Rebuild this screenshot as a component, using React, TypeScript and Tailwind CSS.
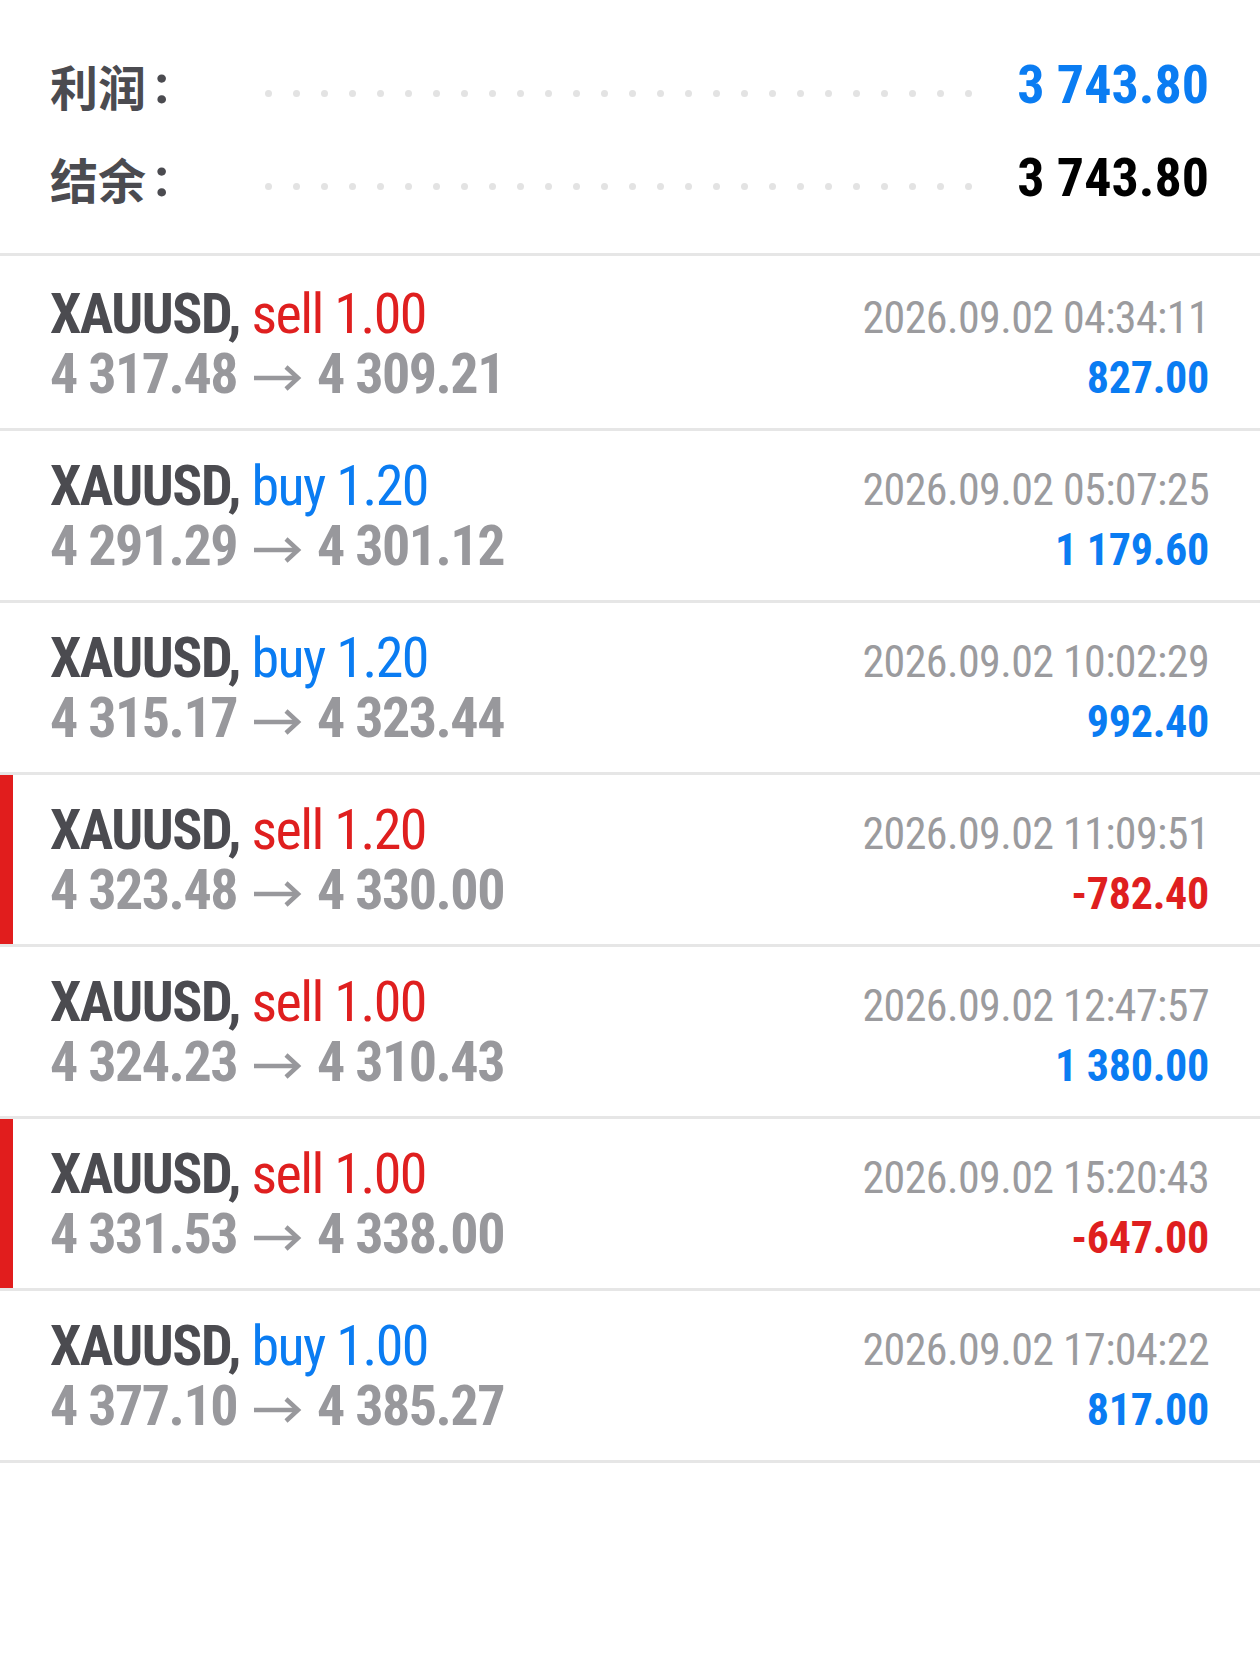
import React from "react";

type Trade = {
	side: "buy" | "sell";
	lots: string;
	open: string;
	close: string;
	time: string;
	profit: string;
};

const trades: Trade[] = [
	{ side: "sell", lots: "1.00", open: "4 317.48", close: "4 309.21", time: "2026.09.02 04:34:11", profit: "827.00" },
	{ side: "buy", lots: "1.20", open: "4 291.29", close: "4 301.12", time: "2026.09.02 05:07:25", profit: "1 179.60" },
	{ side: "buy", lots: "1.20", open: "4 315.17", close: "4 323.44", time: "2026.09.02 10:02:29", profit: "992.40" },
	{ side: "sell", lots: "1.20", open: "4 323.48", close: "4 330.00", time: "2026.09.02 11:09:51", profit: "-782.40" },
	{ side: "sell", lots: "1.00", open: "4 324.23", close: "4 310.43", time: "2026.09.02 12:47:57", profit: "1 380.00" },
	{ side: "sell", lots: "1.00", open: "4 331.53", close: "4 338.00", time: "2026.09.02 15:20:43", profit: "-647.00" },
	{ side: "buy", lots: "1.00", open: "4 377.10", close: "4 385.27", time: "2026.09.02 17:04:22", profit: "817.00" },
];

const Dots = () => (
	<div className="mt-[18px] flex gap-[21px]">
		{Array.from({ length: 26 }).map((_, i) => (
			<span key={i} className="block h-[7px] w-[7px] rounded-full bg-[#e3e3e3]" />
		))}
	</div>
);

const Arrow = () => (
	<svg width="50" height="26" viewBox="0 0 50 26" className="mx-[15px] inline-block align-middle" fill="none" stroke="#98989c" strokeWidth="4.5">
		<path d="M2 13h44" />
		<path d="M34 2l12 11-12 11" />
	</svg>
);

const SummaryRow = ({ label, value, valueClass }: { label: string; value: string; valueClass: string }) => (
	<div className="flex h-[93px] items-center">
		<div className="flex w-[215px] items-center font-bold text-[#4b4b50]">
			<span className="font-['Noto_Sans_CJK_SC',sans-serif] text-[48px]">{label}</span>
			<span className="ml-[8px] text-[54px]">:</span>
		</div>
		<Dots />
		<div className={`flex-1 text-right text-[54px] font-bold ${valueClass}`}>{value}</div>
	</div>
);

const TradeRow = ({ t, first }: { t: Trade; first: boolean }) => {
	const loss = t.profit.startsWith("-");
	return (
		<div className={`relative flex border-b-[3px] border-[#e6e6e6] pb-[24px] pl-[50px] pr-[51px] ${first ? "pt-[28px]" : "pt-[25px]"}`}>
			{loss && <div className="absolute bottom-0 left-0 top-0 w-[13px] bg-[#e11d1d]" />}
			<div className="flex-1 text-[56px] leading-[60px] tracking-[-1.5px]">
				<div className="h-[60px] whitespace-nowrap">
					<span className="font-bold text-[#4b4b50]">XAUUSD, </span>
					<span className={t.side === "sell" ? "text-[#df1f1f]" : "text-[#0a7cf2]"}>
						{t.side} {t.lots}
					</span>
				</div>
				<div className="h-[60px] whitespace-nowrap font-bold text-[#98989c]">
					{t.open}
					<Arrow />
					{t.close}
				</div>
			</div>
			<div className="flex h-[120px] flex-col items-end pt-[4px] text-[44px] leading-[60px]">
				<div className="h-[60px] whitespace-nowrap tracking-[-0.6px] text-[#9b9b9e]">{t.time}</div>
				<div className={`h-[56px] whitespace-nowrap font-bold tracking-[-0.3px] ${loss ? "text-[#df1f1f]" : "text-[#0a7cf2]"}`}>{t.profit}</div>
			</div>
		</div>
	);
};

export default function App() {
	return (
		<div className="min-h-[1661px] w-[1260px] bg-white font-['Roboto_Condensed','Liberation_Sans_Narrow','DejaVu_Sans_Condensed',Roboto,'Noto_Sans_CJK_SC',sans-serif] font-stretch-condensed">
			<div className="border-b-[3px] border-[#e6e6e6] pb-[29px] pl-[50px] pr-[51px] pt-[38px]">
				<SummaryRow label="利润" value="3 743.80" valueClass="text-[#0a7cf2]" />
				<SummaryRow label="结余" value="3 743.80" valueClass="text-black" />
			</div>
			{trades.map((t, i) => (
				<TradeRow key={i} t={t} first={i === 0} />
			))}
		</div>
	);
}
